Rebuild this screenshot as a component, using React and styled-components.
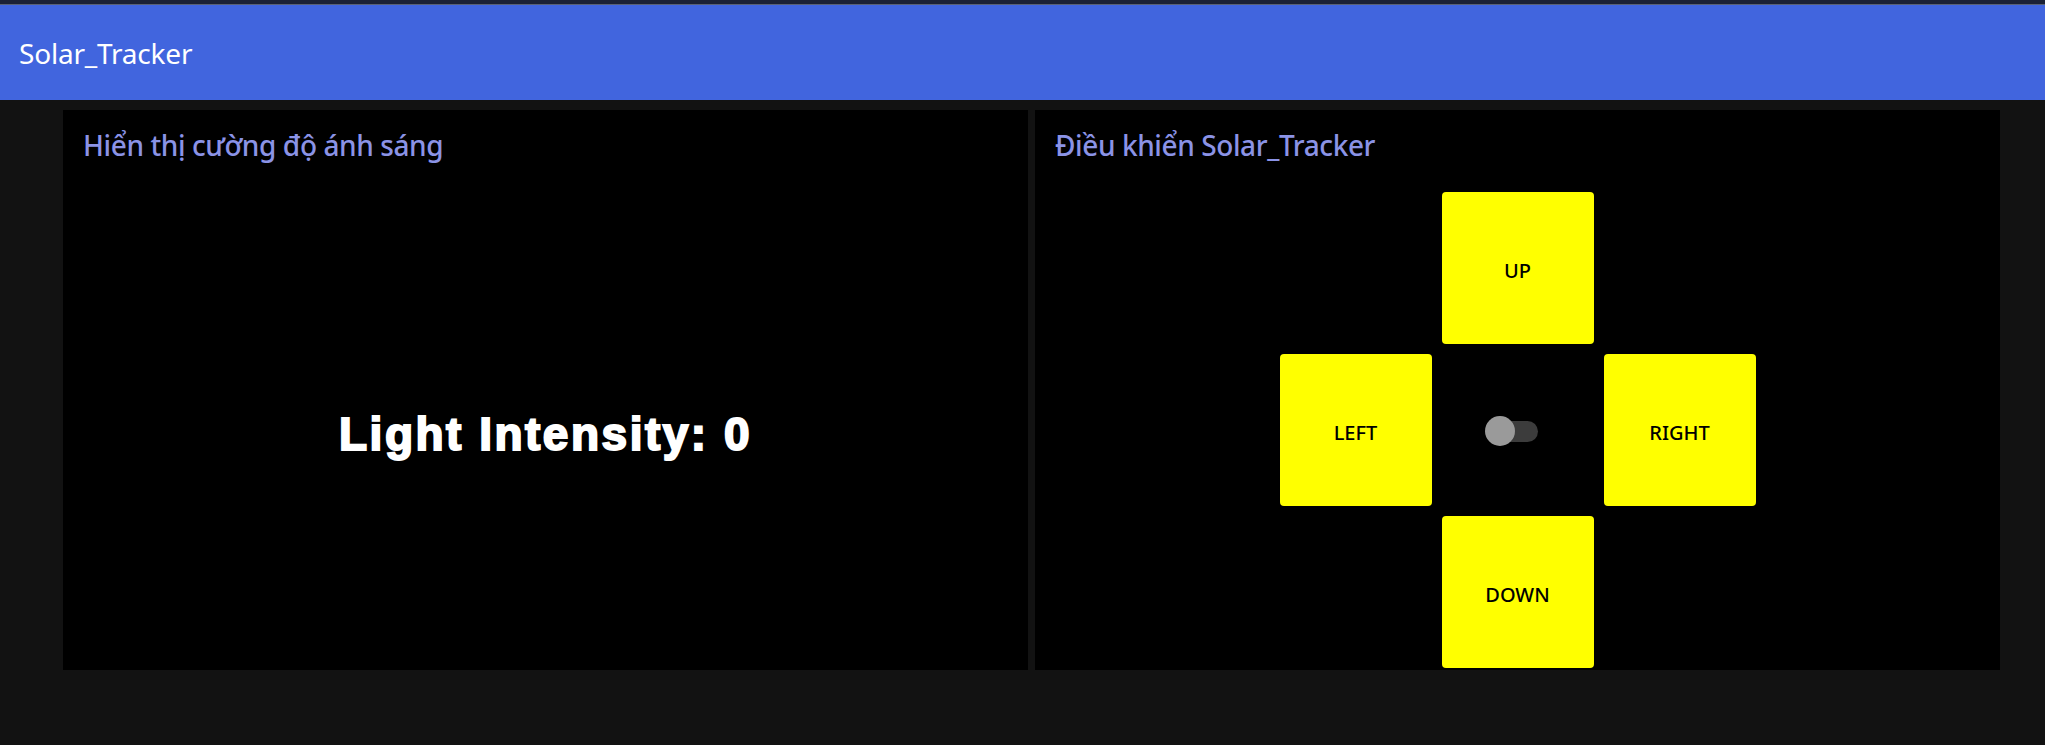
import React, { useState } from 'react';
import styled, { createGlobalStyle } from 'styled-components';

const GlobalStyle = createGlobalStyle`
  * {
    box-sizing: border-box;
  }

  body {
    margin: 0;
    background-color: #121212;
    font-family: "Noto Sans", "Open Sans", sans-serif;
  }
`

const directions = ['UP', 'LEFT', 'RIGHT', 'DOWN'];

const App = () => {
  const [auto, setAuto] = useState(false);

  return (
    <Page>
      <GlobalStyle />
      <Header>
        <Brand>Solar_Tracker</Brand>
      </Header>
      <Main>
        <Panel>
          <PanelTitle>Hiển thị cường độ ánh sáng</PanelTitle>
          <Display>
            <Intensity>Light Intensity: 0</Intensity>
          </Display>
        </Panel>
        <Panel>
          <PanelTitle>Điều khiển Solar_Tracker</PanelTitle>
          <Pad>
            { directions.map((dir) => (
              <DirButton key={ dir } area={ dir.toLowerCase() }>{ dir }</DirButton>
            )) }
            <Center>
              <Switch onClick={ () => setAuto(!auto) }>
                <Track />
                <Knob on={ auto ? 1 : 0 } />
              </Switch>
            </Center>
          </Pad>
        </Panel>
      </Main>
    </Page>
  );
};

export default App;

const Page = styled.div`
  min-height: 100vh;
  background-color: #121212;
`

const Header = styled.header`
  display: flex;
  align-items: center;
  height: 100px;
  padding: 1px 0 0 19px;
  background-color: #4165de;
  border-top: 4px solid #1b2135;
  box-shadow: inset 0 1px 0 #5a6276;
`

const Brand = styled.div`
  font-size: 28px;
  color: #fff;
  letter-spacing: -0.2px;
`

const Main = styled.main`
  display: flex;
  gap: 7px;
  padding: 10px 45px 0 63px;
`

const Panel = styled.section`
  display: flex;
  flex-direction: column;
  flex: 1;
  height: 560px;
  padding: 16px 20px 0;
  background-color: #000;
`

const PanelTitle = styled.h2`
  margin: 0;
  font-size: 28px;
  font-weight: 500;
  letter-spacing: -0.4px;
  color: #8b93e6;
`

const Display = styled.div`
  display: flex;
  flex: 1;
  align-items: center;
  justify-content: center;
  padding-top: 34px;
`

const Intensity = styled.div`
  font-family: "Liberation Sans", Arial, sans-serif;
  font-size: 46px;
  font-weight: 700;
  letter-spacing: 2.5px;
  color: #fff;
  -webkit-text-stroke: 2px #fff;
`

const Pad = styled.div`
  display: grid;
  grid-template-columns: repeat(3, 152px);
  grid-template-rows: repeat(3, 152px);
  grid-template-areas:
    ". up ."
    "left center right"
    ". down .";
  gap: 10px;
  justify-content: center;
  margin-top: 28px;
`

const DirButton = styled.button`
  grid-area: ${ (p) => p.area };
  padding: 4px 0 0;
  border: none;
  border-radius: 4px;
  background-color: #ff0;
  font-family: "Noto Sans", "Open Sans", sans-serif;
  font-size: 20px;
  font-weight: 500;
  color: #000;
  cursor: pointer;
`

const Center = styled.div`
  grid-area: center;
  display: flex;
  align-items: center;
  justify-content: center;
`

const Switch = styled.div`
  position: relative;
  display: flex;
  align-items: center;
  width: 53px;
  height: 30px;
  margin: 2px 13px 0 0;
  cursor: pointer;
`

const Track = styled.div`
  width: 48px;
  height: 21px;
  margin-left: 5px;
  border-radius: 11px;
  background-color: #3c3c3c;
`

const Knob = styled.div`
  position: absolute;
  top: 0;
  left: ${ (p) => (p.on ? '23px' : '0') };
  width: 30px;
  height: 30px;
  border-radius: 50%;
  background-color: #9a9a9a;
`
